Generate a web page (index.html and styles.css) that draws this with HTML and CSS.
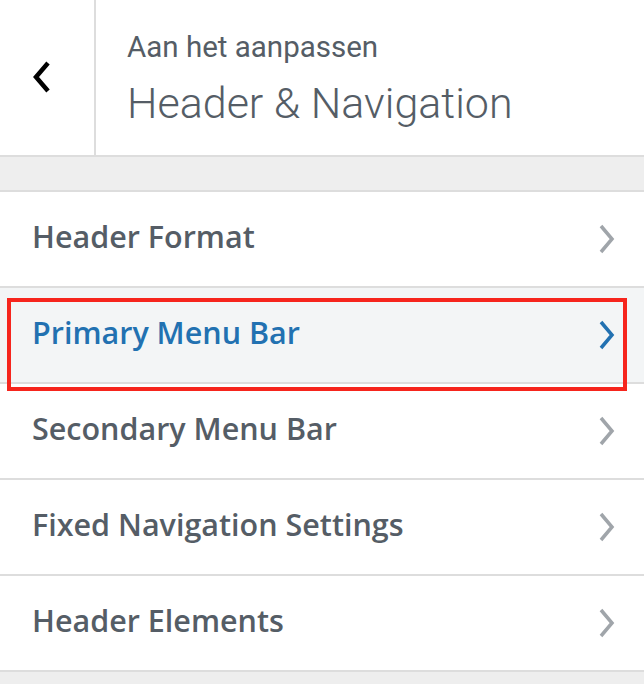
FILE: index.html
```html
<!DOCTYPE html>
<html>
<head>
<meta charset="utf-8">
<link rel="stylesheet" href="styles.css">
</head>
<body>
<div class="panel">
  <header class="head">
    <button class="back" aria-label="Terug">
      <svg width="22" height="34" viewBox="0 0 22 34"><path d="M17 3 L5 17 L17 31" fill="none" stroke="#000" stroke-width="4.5"/></svg>
    </button>
    <div class="titles">
      <div class="sub">Aan het aanpassen</div>
      <div class="title">Header &amp; Navigation</div>
    </div>
  </header>
  <div class="gap"></div>
  <ul class="list">
    <li class="row"><span>Header Format</span><svg class="chev" width="18" height="30" viewBox="0 0 18 30"><path d="M3 2 L14 15 L3 28" fill="none" stroke-width="3.5"/></svg></li>
    <li class="row active"><span>Primary Menu Bar</span><svg class="chev" width="18" height="30" viewBox="0 0 18 30"><path d="M3 2 L14 15 L3 28" fill="none" stroke-width="3.5"/></svg>
      <div class="mark"></div></li>
    <li class="row"><span>Secondary Menu Bar</span><svg class="chev" width="18" height="30" viewBox="0 0 18 30"><path d="M3 2 L14 15 L3 28" fill="none" stroke-width="3.5"/></svg></li>
    <li class="row"><span>Fixed Navigation Settings</span><svg class="chev" width="18" height="30" viewBox="0 0 18 30"><path d="M3 2 L14 15 L3 28" fill="none" stroke-width="3.5"/></svg></li>
    <li class="row"><span>Header Elements</span><svg class="chev" width="18" height="30" viewBox="0 0 18 30"><path d="M3 2 L14 15 L3 28" fill="none" stroke-width="3.5"/></svg></li>
  </ul>
</div>
</body>
</html>
```
FILE: styles.css
```css
html, body { margin: 0; padding: 0; }
body { background: #eeeeee; width: 644px; height: 684px; overflow: hidden; }
.panel { width: 644px; }
.head {
  display: flex;
  height: 155px;
  background: #fff;
  border-bottom: 2px solid #dddddd;
}
.back {
  width: 96px;
  border: 0;
  border-right: 2px solid #dddddd;
  background: #fff;
  padding: 0;
  display: flex;
  align-items: center;
  justify-content: center;
}
.back svg { margin-top: -1px; margin-left: -11px; }
.titles {
  padding: 29px 0 0 31px;
  font-family: Roboto, "Liberation Sans", sans-serif;
  color: #555d66;
}
.sub { font-size: 29.5px; line-height: 36px; font-weight: 400; }
.title { font-size: 43px; line-height: 50px; font-weight: 300; margin-top: 13px; }
.gap { height: 33px; }
.list {
  list-style: none;
  margin: 0;
  padding: 0;
  border-top: 2px solid #dddddd;
}
.row {
  position: relative;
  display: flex;
  align-items: center;
  justify-content: space-between;
  height: 94px;
  padding: 0 28px 0 32px;
  background: #fff;
  border-bottom: 2px solid #dddddd;
  font-family: "Open Sans", "Noto Sans", sans-serif;
  font-weight: 600;
  font-size: 30.5px;
  color: #555d66;
}
.row span { margin-top: -6px; }
.chev { stroke: #a0a5aa; }
.active { background: #f3f5f6; color: #2271b1; }
.active .chev { stroke: #2271b1; }
.mark {
  position: absolute;
  z-index: 5;
  left: 7px;
  top: 10px;
  width: 612px;
  height: 85px;
  border: 4px solid #f6251d;
  pointer-events: none;
}
```
